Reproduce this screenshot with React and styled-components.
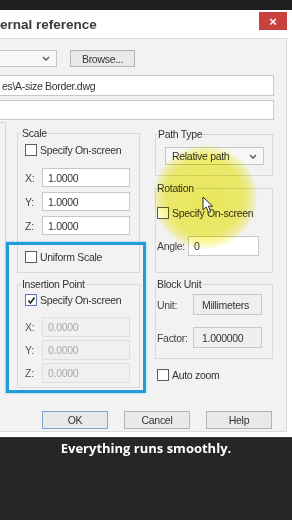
import React from "react";
import styled, { createGlobalStyle } from "styled-components";

const Global = createGlobalStyle`
  html, body { margin: 0; padding: 0; }
  body {
    width: 292px;
    height: 520px;
    overflow: hidden;
    background: #252525;
    font-family: "Liberation Sans", Arial, sans-serif;
  }
`;

const Page = styled.div`
  display: flex;
  flex-direction: column;
  width: 292px;
  height: 520px;
`;

const TopBar = styled.div`
  flex: none;
  height: 10px;
  background: #1e1e1e;
`;

const Dialog = styled.div`
  flex: none;
  height: 427px;
  background: #fff;
  display: flex;
  flex-direction: column;
  overflow: hidden;
  font-size: 10.5px;
  letter-spacing: -0.3px;
  color: #333;
`;

const TitleRow = styled.div`
  height: 28px;
  display: flex;
  justify-content: space-between;
  padding-right: 5px;
`;

const Title = styled.div`
  font-size: 13.5px;
  font-weight: 700;
  letter-spacing: 0;
  color: #3a3a3a;
  line-height: 16px;
  margin-top: 7px;
`;

const Close = styled.div`
  width: 28px;
  height: 18px;
  margin-top: 2px;
  background: #c8413f;
  color: #fff;
  display: flex;
  align-items: center;
  justify-content: center;
  font-size: 13px;
  font-weight: 700;
`;

const Panel = styled.div`
  position: relative;
  height: 394px;
  box-sizing: border-box;
  margin-right: 5px;
  padding-top: 11px;
  background: #f2f2f2;
  border: 1px solid #dcdcdc;
  border-left: none;
`;

const Row = styled.div`
  display: flex;
  align-items: center;
  gap: ${p => p.$gap || 0}px;
  margin-top: ${p => p.$mt || 0}px;
  padding-left: ${p => p.$pl || 0}px;
`;

const Combo = styled.div`
  box-sizing: border-box;
  width: ${p => p.$w}px;
  height: ${p => p.$h}px;
  display: flex;
  align-items: center;
  justify-content: space-between;
  padding: 0 6px 0 ${p => p.$pl || 0}px;
  background: #f7f7f7;
  border: 1px solid #c6c6c6;
  ${p => p.$cut && "border-left: none;"}
`;

const Button = styled.div`
  box-sizing: border-box;
  width: ${p => p.$w}px;
  height: ${p => p.$h}px;
  display: flex;
  align-items: center;
  justify-content: center;
  background: #e9e9e9;
  border: 1px solid ${p => (p.$focus ? "#7aa7d6" : "#b4b4b4")};
  color: #333;
`;

const TextBox = styled.div`
  box-sizing: border-box;
  width: ${p => p.$w}px;
  height: ${p => p.$h}px;
  margin-top: ${p => p.$mt || 0}px;
  display: flex;
  align-items: center;
  padding-left: ${p => p.$pl ?? 5}px;
  background: ${p => (p.$disabled ? "#f0f0f0" : p.$ro ? "#efefef" : "#fff")};
  border: 1px solid ${p => (p.$disabled ? "#dedede" : "#c8c8c8")};
  color: ${p => (p.$disabled ? "#a9a9a9" : "#333")};
  ${p => p.$cut && "border-left: none;"}
`;

const Main = styled.div`
  display: flex;
  align-items: flex-start;
  margin-top: 2px;
`;

const Stub = styled.div`
  width: 5px;
  height: 272px;
  border-top: 1px solid #d6d6d6;
  border-right: 1px solid #d6d6d6;
`;

const Column = styled.div`
  display: flex;
  flex-direction: column;
  width: ${p => p.$w}px;
  margin-left: ${p => p.$ml}px;
  margin-top: ${p => p.$mt}px;
`;

const Group = styled.fieldset`
  margin: ${p => p.$mt || 0}px 0 0 0;
  padding: ${p => p.$pad};
  border: 1px solid #d9d9d9;
  min-width: 0;
  box-sizing: border-box;
  display: flex;
  flex-direction: column;
  align-items: flex-start;
`;

const Legend = styled.legend`
  padding: 0 1px;
  margin-left: ${p => p.$ml}px;
  line-height: 12px;
  color: #333;
`;

const Field = styled.div`
  display: flex;
  align-items: center;
  height: ${p => p.$h}px;
  margin-top: ${p => p.$mt || 0}px;
`;

const Label = styled.span`
  width: ${p => p.$w}px;
  flex: none;
  color: ${p => (p.$dim ? "#555" : "#444")};
`;

const CheckRow = styled.label`
  display: flex;
  align-items: center;
  gap: 3px;
  height: 12px;
  margin-top: ${p => p.$mt || 0}px;
  margin-left: ${p => p.$ml || 0}px;
  white-space: nowrap;
`;

const Box = styled.span`
  box-sizing: border-box;
  width: 12px;
  height: 12px;
  flex: none;
  display: flex;
  align-items: center;
  justify-content: center;
  background: #fff;
  border: 1px solid ${p => (p.$on ? "#5a78a8" : "#5c5c5c")};
`;

const Buttons = styled.div`
  display: flex;
  gap: 16px;
  margin-top: 16px;
  padding-left: 42px;
`;

const Highlight = styled.div`
  position: absolute;
  left: 6px;
  top: 203px;
  width: 140px;
  height: 151px;
  box-sizing: border-box;
  border: 3px solid #229cd8;
  box-shadow: 0 0 2px rgba(34, 156, 216, 0.5);
  pointer-events: none;
`;

const Spot = styled.div`
  position: absolute;
  left: 153px;
  top: 106px;
  width: 104px;
  height: 104px;
  border-radius: 50%;
  background: radial-gradient(
    circle,
    rgba(246, 244, 98, 1) 0%,
    rgba(246, 244, 98, 0.92) 52%,
    rgba(246, 244, 98, 0.5) 64%,
    rgba(246, 244, 98, 0) 72%
  );
  mix-blend-mode: multiply;
  pointer-events: none;
`;

const Cursor = styled.svg`
  position: absolute;
  left: 202px;
  top: 157px;
`;

const Footer = styled.div`
  flex: 1;
  background: #262626;
  border-top: 1px solid #3a3a3a;
  text-align: center;
  padding-top: 2px;
`;

const Caption = styled.div`
  font-family: "Open Sans", "Liberation Sans", sans-serif;
  font-weight: 700;
  font-size: 13px;
  line-height: 16px;
  color: #fff;
`;

function Chevron() {
  return (
    <svg width="8" height="5" viewBox="0 0 8 5">
      <polyline points="1,1 4,4 7,1" fill="none" stroke="#555" strokeWidth="1.3" />
    </svg>
  );
}

function Check({ on, children, mt, ml }) {
  return (
    <CheckRow $mt={mt} $ml={ml}>
      <Box $on={on}>
        {on && (
          <svg width="9" height="9" viewBox="0 0 9 9">
            <polyline points="1.5,4.5 3.5,7 7.5,1.5" fill="none" stroke="#222" strokeWidth="1.6" />
          </svg>
        )}
      </Box>
      {children}
    </CheckRow>
  );
}

function Coord({ name, value, mt, disabled }) {
  return (
    <Field $h={disabled ? 20 : 19} $mt={mt}>
      <Label $w={17} $dim={disabled}>{name}:</Label>
      <TextBox $w={88} $h={disabled ? 20 : 19} $disabled={disabled}>{value}</TextBox>
    </Field>
  );
}

export default function App() {
  return (
    <Page>
      <Global />
      <TopBar />
      <Dialog>
        <TitleRow>
          <Title>ernal reference</Title>
          <Close>×</Close>
        </TitleRow>
        <Panel>
          <Row $gap={13}>
            <Combo $w={57} $h={17} $cut>
              <span />
              <Chevron />
            </Combo>
            <Button $w={65} $h={17}>Browse...</Button>
          </Row>
          <TextBox $w={274} $h={21} $mt={8} $pl={2} $cut>es\A-size Border.dwg</TextBox>
          <TextBox $w={274} $h={20} $mt={4} $cut />

          <Main>
            <Stub />
            <Column $w={123} $ml={11} $mt={5}>
              <Group $pad="5px 9px 9px 7px">
                <Legend $ml={-4}>Scale</Legend>
                <Check>Specify On-screen</Check>
                <Row $mt={12} />
                <Coord name="X" value="1.0000" />
                <Coord name="Y" value="1.0000" mt={5} />
                <Coord name="Z" value="1.0000" mt={5} />
                <Check mt={16}>Uniform Scale</Check>
              </Group>
              <Group $mt={5} $pad="4px 9px 4px 7px">
                <Legend $ml={-4}>Insertion Point</Legend>
                <Check on>Specify On-screen</Check>
                <Coord name="X" value="0.0000" mt={11} disabled />
                <Coord name="Y" value="0.0000" mt={3} disabled />
                <Coord name="Z" value="0.0000" mt={3} disabled />
              </Group>
            </Column>

            <Column $w={118} $ml={15} $mt={6}>
              <Group $pad="7px 8px 10px 9px">
                <Legend $ml={-8}>Path Type</Legend>
                <Combo $w={99} $h={18} $pl={6}>
                  <span>Relative path</span>
                  <Chevron />
                </Combo>
              </Group>
              <Group $mt={6} $pad="13px 8px 16px 1px">
                <Legend $ml={-1}>Rotation</Legend>
                <Check>Specify On-screen</Check>
                <Field $h={20} $mt={17}>
                  <Label $w={31}>Angle:</Label>
                  <TextBox $w={71} $h={20}>0</TextBox>
                </Field>
              </Group>
              <Group $mt={5} $pad="4px 8px 10px 1px">
                <Legend $ml={-1}>Block Unit</Legend>
                <Field $h={21}>
                  <Label $w={36}>Unit:</Label>
                  <TextBox $w={69} $h={21} $ro $pl={8}>Millimeters</TextBox>
                </Field>
                <Field $h={21} $mt={12}>
                  <Label $w={36}>Factor:</Label>
                  <TextBox $w={69} $h={21} $ro $pl={8}>1.000000</TextBox>
                </Field>
              </Group>
              <Check mt={10} ml={2}>Auto zoom</Check>
            </Column>
          </Main>

          <Buttons>
            <Button $w={66} $h={18} $focus>OK</Button>
            <Button $w={66} $h={18}>Cancel</Button>
            <Button $w={66} $h={18}>Help</Button>
          </Buttons>

          <Highlight />
          <Spot />
          <Cursor width="12" height="18" viewBox="0 0 12 18">
            <path
              d="M1 1 L1 14 L4.2 11 L6.6 16.5 L8.8 15.5 L6.4 10.2 L10.6 10.2 Z"
              fill="#fff"
              stroke="#2a2a2a"
              strokeWidth="1"
              strokeLinejoin="round"
            />
          </Cursor>
        </Panel>
      </Dialog>
      <Footer>
        <Caption>Everything runs smoothly.</Caption>
      </Footer>
    </Page>
  );
}
